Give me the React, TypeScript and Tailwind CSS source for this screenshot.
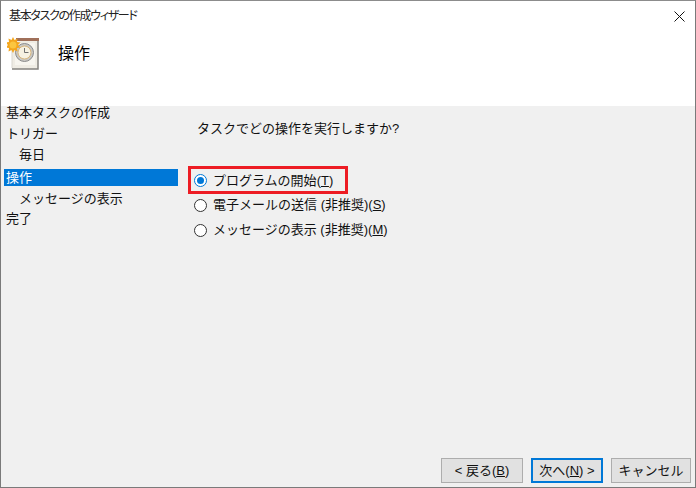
const FONT = "font-['Liberation_Sans','Noto_Sans_CJK_JP',sans-serif]";

function TaskIcon() {
  return (
    <svg width="32" height="33" viewBox="0 0 32 33" className="block shrink-0">
      <path d="M5 3h26v29H5z" fill="#efece4" />
      <path d="M31 3v29H5" fill="none" stroke="#85837f" strokeWidth="1.500" />
      <path d="M5 3v28" fill="none" stroke="#d9d6cf" />
      <rect x="9" y="1" width="23" height="3" fill="#a0705a" />
      <rect x="8" y="6" width="20" height="22" fill="#f7f5ef" />
      <circle cx="17.500" cy="15.500" r="9" fill="#c9c8c5" stroke="#8b8b8b" />
      <circle cx="17.500" cy="15.500" r="6.500" fill="#f6f1e2" stroke="#d8b67d" />
      <path d="M17.500 11v4.500h4" fill="none" stroke="#6f6f6f" />
      <path
        d="M6 0l1.500 3 3-1.500-.500 3.500 3.500.500-2.500 2.500 2.500 2.500-3.500.500.500 3.500-3-1.500L6 16l-1.500-3-3 1.500.500-3.500-3.500-.500L1 8 -1.500 5.500 2 5l-.500-3.500 3 1.500z"
        fill="#f4a51c"
      />
      <circle cx="6" cy="8" r="3.500" fill="#fbc63f" />
    </svg>
  );
}

function CloseIcon() {
  return (
    <svg width="11" height="11" viewBox="0 0 11 11" className="block">
      <path d="M.5.5l10 10M10.500.5l-10 10" fill="none" stroke="#111111" strokeWidth="1" />
    </svg>
  );
}

function Radio({ checked }: { checked?: boolean }) {
  return (
    <span
      className={`flex h-[13px] w-[13px] shrink-0 items-center justify-center rounded-full border bg-white ${
        checked ? "border-[#0078d7]" : "border-[#333333]"
      }`}
    >
      {checked ? <span className="h-[7px] w-[7px] rounded-full bg-[#0078d7]" /> : null}
    </span>
  );
}

function Option({ checked, label, hotkey, suffix }: { checked?: boolean; label: string; hotkey: string; suffix?: string }) {
  return (
    <label className={`flex items-center gap-[6px] text-[13px] text-[#111111] ${checked ? "h-[24px]" : "h-[25px]"}`}>
      <Radio checked={checked} />
      <span className="whitespace-nowrap">
        {label}
        {suffix}(<u>{hotkey}</u>)
      </span>
    </label>
  );
}

function WizButton({ children, className }: { children: React.ReactNode; className: string }) {
  return (
    <button className={`flex h-[25px] items-center justify-center whitespace-nowrap bg-[#e1e1e1] text-[13px] text-[#111111] ${className}`}>
      {children}
    </button>
  );
}

const STEPS = [
  { label: "基本タスクの作成", indent: false },
  { label: "トリガー", indent: false },
  { label: "毎日", indent: true },
  { label: "操作", indent: false, selected: true },
  { label: "メッセージの表示", indent: true },
  { label: "完了", indent: false },
];

export default function App() {
  return (
    <div className={`flex h-[488px] w-[696px] flex-col overflow-hidden border border-[#7a7a7a] border-t-[#8c8c8c] bg-white ${FONT}`}>
      <div className="flex h-[30px] shrink-0 items-center justify-between pl-[8px] pr-[10px]">
        <span className="text-[12px] tracking-[-1.3px] text-[#222222] [font-feature-settings:'palt']">基本タスクの作成ウィザード</span>
        <CloseIcon />
      </div>
      <div className="flex h-[75px] shrink-0 items-start pl-[6px] pt-[6px]">
        <TaskIcon />
        <span className="ml-[19px] mt-[5px] text-[16px] text-black">操作</span>
      </div>
      <div className="flex min-h-0 flex-1 flex-col bg-[#f0f0f0]">
        <div className="flex min-h-0 flex-1">
          <ul className="-mt-[4px] w-[177px] shrink-0 pl-[3px] text-[13px] text-[#111111]">
            {STEPS.map((s) => (
              <li
                key={s.label}
                className={`flex h-[21px] items-center ${s.indent ? "pl-[15px]" : "pl-[2px]"} ${s.selected ? "mt-[2px]" : ""} ${s.label === "完了" ? "-mt-[1px]" : ""}`}
              >
                <span
                  className={
                    s.selected
                      ? "-ml-[2px] flex h-[17px] w-[174px] items-center bg-[#0078d7] pl-[2px] text-white"
                      : ""
                  }
                >
                  {s.label}
                </span>
              </li>
            ))}
          </ul>
          <div className="pl-[16px] pt-[13px]">
            <p className="pl-[3px] text-[13px] text-[#111111]">タスクでどの操作を実行しますか?</p>
            <div className="mt-[30px] flex flex-col">
              <div className="relative">
                <Option checked label="プログラムの開始" hotkey="T" />
                <div className="absolute left-[-6px] top-[-3px] h-[28px] w-[160px] border-[3px] border-[#ed1c24]" />
              </div>
              <Option label="電子メールの送信" suffix=" (非推奨)" hotkey="S" />
              <Option label="メッセージの表示" suffix=" (非推奨)" hotkey="M" />
            </div>
          </div>
        </div>
        <div className="flex h-[29px] shrink-0 items-start justify-end gap-[8px] pr-[4px]">
          <WizButton className="w-[82px] border border-[#adadad]">
            &lt; 戻る(<u>B</u>)
          </WizButton>
          <WizButton className="w-[72px] border-2 border-[#0078d7]">
            次へ(<u>N</u>) &gt;
          </WizButton>
          <WizButton className="w-[80px] border border-[#adadad]">キャンセル</WizButton>
        </div>
      </div>
    </div>
  );
}
